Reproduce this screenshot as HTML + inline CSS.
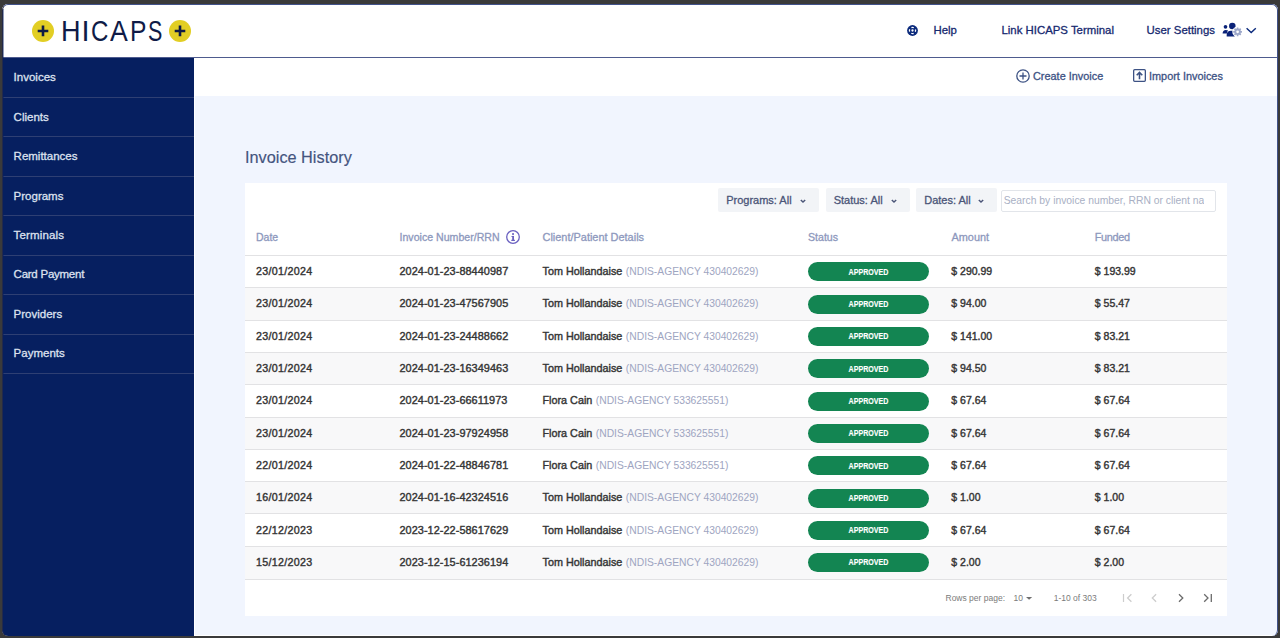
<!DOCTYPE html>
<html><head><meta charset="utf-8">
<style>
*{box-sizing:border-box;margin:0;padding:0}
html,body{width:1280px;height:638px;overflow:hidden;background:#3a3a3a;font-family:"Liberation Sans",sans-serif}
.frame{position:absolute;left:2px;top:4px;width:1276px;height:632px;border-radius:6px;overflow:hidden;background:#fff}
.inner{position:absolute;left:-2px;top:-4px;width:1280px;height:638px}
.fb{position:absolute;left:2px;top:4px;width:1276px;height:632px;border-radius:6px;border:1px solid #41528a;border-left-color:#23294a;border-bottom:0;pointer-events:none}
.a{position:absolute;white-space:nowrap;line-height:1}
.logo{top:17.2px;font-size:29px;color:#0f1b47;transform-origin:0 0}
.md{-webkit-text-stroke:0.3px currentColor}
.header{position:absolute;left:0;top:0;width:1280px;height:57px;background:#fff}
.hline{position:absolute;left:0;top:57px;width:1280px;height:1px;background:#4e5b8e}
.hd{font-size:11.4px;color:#16296f;top:25.1px}
.side{position:absolute;left:0;top:58px;width:194px;height:580px;background:#061f60}
.side .it{position:absolute;left:0;width:194px;height:40px;border-bottom:1px solid #2e3f73}
.side .it span{position:absolute;left:13.6px;top:14.3px;font-size:11.5px;line-height:1;color:#dde1ef;-webkit-text-stroke:0.3px #dde1ef;white-space:nowrap}
.main{position:absolute;left:195px;top:96px;width:1085px;height:542px;background:#f1f5fe}
.sub{position:absolute;left:194px;top:58px;width:1086px;height:38px;background:#fff}
.vline{position:absolute;left:194px;top:58px;width:1px;height:580px;background:#fff}
.card{position:absolute;left:245px;top:183px;width:982px;height:433px;background:#fff}
.btn{position:absolute;top:188px;height:24.4px;background:#f2f4f7;border-radius:2px}
.btn span{position:absolute;left:8.2px;top:6.5px;font-size:11px;line-height:1;color:#4b5578;-webkit-text-stroke:0.3px #4b5578;white-space:nowrap}
.btn svg{position:absolute;top:10.5px}
.th{position:absolute;top:231.6px;color:#8d98bd;font-size:10.6px;line-height:1;-webkit-text-stroke:0.3px #8d98bd;white-space:nowrap}
.row{position:absolute;left:245px;width:982px;border-top:1px solid #e2e2e4}
.td{position:absolute;color:#353535;font-size:11.2px;line-height:1;-webkit-text-stroke:0.4px #353535;white-space:nowrap}
.nm{font-size:10.8px}
.dt{font-size:10.7px;letter-spacing:0.3px}
.inv{font-size:10.9px;letter-spacing:0.05px}
.amt{font-size:10.5px}
.gr{margin-left:0.5px;color:#9ea5c1;-webkit-text-stroke:0 transparent;font-size:10.3px}
.badge{position:absolute;left:808px;width:121px;height:19px;border-radius:9.5px;background:#138552}
.badge span{position:absolute;left:0;width:121px;top:5.3px;text-align:center;color:#fff;font-size:8.9px;line-height:1;font-weight:bold;transform:scaleX(0.8);-webkit-text-stroke:0.15px #fff;letter-spacing:0}
.pg{position:absolute;top:593.9px;color:#7b7b7b;font-size:8.5px;line-height:1;white-space:nowrap}
</style></head><body>
<div class="frame"><div class="inner">
  <div class="header"></div>
  <div class="hline"></div>
  <!-- logo -->
  <svg class="a" style="left:32px;top:20px" width="22" height="22" viewBox="0 0 22 22"><circle cx="11" cy="11" r="11" fill="#e2ce24"/><path d="M11 5.6v10.6M5.7 11h10.6" stroke="#0f1b45" stroke-width="2.6"/></svg>
  <div class="a logo" style="left:60.68px;transform:scaleX(0.934)">H</div><div class="a logo" style="left:81.5px;transform:scaleX(1.0)">I</div><div class="a logo" style="left:90.8px;transform:scaleX(0.83)">C</div><div class="a logo" style="left:110.4px;transform:scaleX(0.92)">A</div><div class="a logo" style="left:130.2px;transform:scaleX(0.85)">P</div><div class="a logo" style="left:148.0px;transform:scaleX(0.74)">S</div>
  <svg class="a" style="left:169px;top:20px" width="22" height="22" viewBox="0 0 22 22"><circle cx="11" cy="11" r="11" fill="#e2ce24"/><path d="M11 5.6v10.6M5.7 11h10.6" stroke="#0f1b45" stroke-width="2.6"/></svg>

  <!-- header right -->
  <svg class="a" style="left:906.9px;top:24.9px" width="11" height="11" viewBox="0 0 11 11"><circle cx="5.5" cy="5.5" r="5.4" fill="#0b2a7c"/><circle cx="5.5" cy="5.5" r="1.15" fill="#fff"/><circle cx="5.5" cy="5.5" r="3.05" fill="none" stroke="#fff" stroke-width="1.25" stroke-dasharray="2.5 2.21" stroke-dashoffset="1.25"/></svg>
  <div class="a md hd" style="left:933.5px">Help</div>
  <div class="a md hd" style="left:1001.5px">Link HICAPS Terminal</div>
  <div class="a md hd" style="left:1146.6px">User Settings</div>
  <svg class="a" style="left:1218px;top:18px" width="44" height="24" viewBox="0 0 44 24">
    <circle cx="7.5" cy="8.8" r="1.85" fill="#0a2278"/>
    <path d="M4.6 15.6c-.1-2.3 1.2-3.7 3.2-3.7 1 0 1.8.3 2.3.7-.7.8-1.1 1.8-1.2 3z" fill="#0a2278"/>
    <circle cx="14.3" cy="8.1" r="3.25" fill="#0a2278"/>
    <path d="M8.7 18.5v-1.8c0-2.3 1.8-3.9 4.2-3.9h2.2c1.5 0 2.5.5 3.1 1.2l-1.6 4.5z" fill="#0a2278"/>
    <circle cx="19.6" cy="13.8" r="5.3" fill="#fff"/>
    <g transform="translate(19.6 13.8)" fill="#9ca7c9">
      <circle r="3.2"/>
      <rect x="-0.85" y="-4.4" width="1.7" height="8.8" rx="0.3"/>
      <rect x="-0.85" y="-4.4" width="1.7" height="8.8" rx="0.3" transform="rotate(45)"/>
      <rect x="-0.85" y="-4.4" width="1.7" height="8.8" rx="0.3" transform="rotate(90)"/>
      <rect x="-0.85" y="-4.4" width="1.7" height="8.8" rx="0.3" transform="rotate(135)"/>
      <circle r="1.35" fill="#fff"/>
    </g>
    <path d="M28.6 10.3l4.6 4.3 4.6-4.3" fill="none" stroke="#0b2a7c" stroke-width="1.4"/>
  </svg>

  <!-- sidebar -->
  <div class="side">
    <div class="it" style="top:0px"><span>Invoices</span></div>
    <div class="it" style="top:39.43px"><span>Clients</span></div>
    <div class="it" style="top:78.86px"><span>Remittances</span></div>
    <div class="it" style="top:118.29px"><span>Programs</span></div>
    <div class="it" style="top:157.72px"><span style="letter-spacing:0.15px">Terminals</span></div>
    <div class="it" style="top:197.15px"><span style="letter-spacing:-0.25px">Card Payment</span></div>
    <div class="it" style="top:236.58px"><span>Providers</span></div>
    <div class="it" style="top:276.01px"><span>Payments</span></div>
  </div>
  <div class="sub"></div>
  <div class="main"></div>
  <div class="vline"></div>
  <div style="position:absolute;left:194px;top:635px;width:1086px;height:3px;background:#fff"></div>

  <!-- subheader actions -->
  <svg class="a" style="left:1016px;top:68.5px" width="14" height="14" viewBox="0 0 14 14"><circle cx="7" cy="7" r="6.2" fill="none" stroke="#3d5284" stroke-width="1.3"/><path d="M7 3.5v7M3.5 7h7" stroke="#3d5284" stroke-width="1.3"/></svg>
  <div class="a md" style="left:1033px;top:71.3px;font-size:10.9px;color:#3d5284">Create Invoice</div>
  <svg class="a" style="left:1133px;top:69px" width="13" height="13" viewBox="0 0 13 13"><rect x="0.65" y="0.65" width="11.7" height="11.7" rx="1" fill="none" stroke="#3d5284" stroke-width="1.3"/><path d="M6.5 10.2V3.6M3.7 6.3l2.8-2.8 2.8 2.8" fill="none" stroke="#3d5284" stroke-width="1.6"/></svg>
  <div class="a md" style="left:1149px;top:71.3px;font-size:10.9px;color:#3d5284">Import Invoices</div>

  <div class="a" style="left:245px;top:148.5px;font-size:16.3px;color:#44547e;-webkit-text-stroke:0.15px #44547e">Invoice History</div>

  <div class="card"></div>
  <div class="btn" style="left:718px;width:100.5px"><span>Programs: All</span><svg style="left:81.8px" width="6" height="5" viewBox="0 0 6 5"><path d="M0.8 0.9l2.2 2.2 2.2-2.2" fill="none" stroke="#4b5578" stroke-width="1.4"/></svg></div>
  <div class="btn" style="left:825.5px;width:84px"><span>Status: All</span><svg style="left:65.5px" width="6" height="5" viewBox="0 0 6 5"><path d="M0.8 0.9l2.2 2.2 2.2-2.2" fill="none" stroke="#4b5578" stroke-width="1.4"/></svg></div>
  <div class="btn" style="left:916px;width:80.5px"><span>Dates: All</span><svg style="left:62px" width="6" height="5" viewBox="0 0 6 5"><path d="M0.8 0.9l2.2 2.2 2.2-2.2" fill="none" stroke="#4b5578" stroke-width="1.4"/></svg></div>
  <div class="a" style="left:1000.5px;top:190px;width:215.5px;height:21.5px;border:1px solid #e2e5ea;border-radius:2px;overflow:hidden"><div style="position:absolute;left:2.2px;top:0;width:200px;height:20px;overflow:hidden"><span style="position:absolute;left:0;top:4.6px;color:#a9b0c4;font-size:10.35px;line-height:1;white-space:nowrap">Search by invoice number, RRN or client name</span></div></div>

  <div class="th" style="left:256px;font-size:10.5px">Date</div>
  <div class="th" style="left:399.5px">Invoice Number/RRN</div>
  <svg class="a" style="left:505.6px;top:229.9px" width="14" height="14" viewBox="0 0 14 14"><circle cx="7" cy="7" r="6.3" fill="none" stroke="#6a60c0" stroke-width="1.3"/><circle cx="7.05" cy="4.1" r="1.05" fill="#6a60c0"/><path d="M5.5 5.9h2.5v3.9h0.9v1.1H5.3V9.8h0.9V7H5.5z" fill="#6a60c0"/></svg>
  <div class="th" style="left:542.5px;font-size:10.95px">Client/Patient Details</div>
  <div class="th" style="left:808px">Status</div>
  <div class="th" style="left:951.5px;font-size:10.9px">Amount</div>
  <div class="th" style="left:1094.8px;font-size:10.9px;letter-spacing:-0.35px">Funded</div>
  <div class="row" style="top:255.00px;height:33.31px;background:#fff"></div>
  <div class="td dt" style="left:256px;top:266.13px">23/01/2024</div>
  <div class="td inv" style="left:399.5px;top:266.13px">2024-01-23-88440987</div>
  <div class="td nm" style="left:542.5px;top:266.13px">Tom Hollandaise <span class="gr">(NDIS-AGENCY 430402629)</span></div>
  <div class="badge" style="top:262.40px"><span>APPROVED</span></div>
  <div class="td amt" style="left:951.3px;top:266.13px">$ 290.99</div>
  <div class="td amt" style="left:1094.8px;top:266.13px">$ 193.99</div>
  <div class="row" style="top:287.31px;height:33.31px;background:#f8f8f9"></div>
  <div class="td dt" style="left:256px;top:298.44px">23/01/2024</div>
  <div class="td inv" style="left:399.5px;top:298.44px">2024-01-23-47567905</div>
  <div class="td nm" style="left:542.5px;top:298.44px">Tom Hollandaise <span class="gr">(NDIS-AGENCY 430402629)</span></div>
  <div class="badge" style="top:294.71px"><span>APPROVED</span></div>
  <div class="td amt" style="left:951.3px;top:298.44px">$ 94.00</div>
  <div class="td amt" style="left:1094.8px;top:298.44px">$ 55.47</div>
  <div class="row" style="top:319.62px;height:33.31px;background:#fff"></div>
  <div class="td dt" style="left:256px;top:330.75px">23/01/2024</div>
  <div class="td inv" style="left:399.5px;top:330.75px">2024-01-23-24488662</div>
  <div class="td nm" style="left:542.5px;top:330.75px">Tom Hollandaise <span class="gr">(NDIS-AGENCY 430402629)</span></div>
  <div class="badge" style="top:327.02px"><span>APPROVED</span></div>
  <div class="td amt" style="left:951.3px;top:330.75px">$ 141.00</div>
  <div class="td amt" style="left:1094.8px;top:330.75px">$ 83.21</div>
  <div class="row" style="top:351.93px;height:33.31px;background:#f8f8f9"></div>
  <div class="td dt" style="left:256px;top:363.06px">23/01/2024</div>
  <div class="td inv" style="left:399.5px;top:363.06px">2024-01-23-16349463</div>
  <div class="td nm" style="left:542.5px;top:363.06px">Tom Hollandaise <span class="gr">(NDIS-AGENCY 430402629)</span></div>
  <div class="badge" style="top:359.33px"><span>APPROVED</span></div>
  <div class="td amt" style="left:951.3px;top:363.06px">$ 94.50</div>
  <div class="td amt" style="left:1094.8px;top:363.06px">$ 83.21</div>
  <div class="row" style="top:384.24px;height:33.31px;background:#fff"></div>
  <div class="td dt" style="left:256px;top:395.37px">23/01/2024</div>
  <div class="td inv" style="left:399.5px;top:395.37px">2024-01-23-66611973</div>
  <div class="td nm" style="left:542.5px;top:395.37px">Flora Cain <span class="gr">(NDIS-AGENCY 533625551)</span></div>
  <div class="badge" style="top:391.64px"><span>APPROVED</span></div>
  <div class="td amt" style="left:951.3px;top:395.37px">$ 67.64</div>
  <div class="td amt" style="left:1094.8px;top:395.37px">$ 67.64</div>
  <div class="row" style="top:416.55px;height:33.31px;background:#f8f8f9"></div>
  <div class="td dt" style="left:256px;top:427.68px">23/01/2024</div>
  <div class="td inv" style="left:399.5px;top:427.68px">2024-01-23-97924958</div>
  <div class="td nm" style="left:542.5px;top:427.68px">Flora Cain <span class="gr">(NDIS-AGENCY 533625551)</span></div>
  <div class="badge" style="top:423.95px"><span>APPROVED</span></div>
  <div class="td amt" style="left:951.3px;top:427.68px">$ 67.64</div>
  <div class="td amt" style="left:1094.8px;top:427.68px">$ 67.64</div>
  <div class="row" style="top:448.86px;height:33.31px;background:#fff"></div>
  <div class="td dt" style="left:256px;top:459.99px">22/01/2024</div>
  <div class="td inv" style="left:399.5px;top:459.99px">2024-01-22-48846781</div>
  <div class="td nm" style="left:542.5px;top:459.99px">Flora Cain <span class="gr">(NDIS-AGENCY 533625551)</span></div>
  <div class="badge" style="top:456.26px"><span>APPROVED</span></div>
  <div class="td amt" style="left:951.3px;top:459.99px">$ 67.64</div>
  <div class="td amt" style="left:1094.8px;top:459.99px">$ 67.64</div>
  <div class="row" style="top:481.17px;height:33.31px;background:#f8f8f9"></div>
  <div class="td dt" style="left:256px;top:492.30px">16/01/2024</div>
  <div class="td inv" style="left:399.5px;top:492.30px">2024-01-16-42324516</div>
  <div class="td nm" style="left:542.5px;top:492.30px">Tom Hollandaise <span class="gr">(NDIS-AGENCY 430402629)</span></div>
  <div class="badge" style="top:488.57px"><span>APPROVED</span></div>
  <div class="td amt" style="left:951.3px;top:492.30px">$ 1.00</div>
  <div class="td amt" style="left:1094.8px;top:492.30px">$ 1.00</div>
  <div class="row" style="top:513.48px;height:33.31px;background:#fff"></div>
  <div class="td dt" style="left:256px;top:524.61px">22/12/2023</div>
  <div class="td inv" style="left:399.5px;top:524.61px">2023-12-22-58617629</div>
  <div class="td nm" style="left:542.5px;top:524.61px">Tom Hollandaise <span class="gr">(NDIS-AGENCY 430402629)</span></div>
  <div class="badge" style="top:520.88px"><span>APPROVED</span></div>
  <div class="td amt" style="left:951.3px;top:524.61px">$ 67.64</div>
  <div class="td amt" style="left:1094.8px;top:524.61px">$ 67.64</div>
  <div class="row" style="top:545.79px;height:34.21px;background:#f8f8f9"></div>
  <div class="td dt" style="left:256px;top:556.92px">15/12/2023</div>
  <div class="td inv" style="left:399.5px;top:556.92px">2023-12-15-61236194</div>
  <div class="td nm" style="left:542.5px;top:556.92px">Tom Hollandaise <span class="gr">(NDIS-AGENCY 430402629)</span></div>
  <div class="badge" style="top:553.19px"><span>APPROVED</span></div>
  <div class="td amt" style="left:951.3px;top:556.92px">$ 2.00</div>
  <div class="td amt" style="left:1094.8px;top:556.92px">$ 2.00</div>
  <div class="row" style="top:579.00px;height:1px"></div>

  <div class="pg" style="left:945.5px">Rows per page:</div>
  <div class="pg" style="left:1013.5px">10</div>
  <svg class="a" style="left:1026px;top:597px" width="7" height="3" viewBox="0 0 7 3"><path d="M0 0h6.2L3.1 2.8z" fill="#6f6f6f"/></svg>
  <div class="pg" style="left:1053.7px">1-10 of 303</div>
  <svg class="a" style="left:1120px;top:592px" width="96" height="12" viewBox="0 0 96 12">
    <path d="M3.5 2v8" stroke="#cdcdcd" stroke-width="1.2"/><path d="M11.4 2.2L7.6 6l3.8 3.8" fill="none" stroke="#cdcdcd" stroke-width="1.3"/>
    <path d="M36.1 2.2L32.3 6l3.8 3.8" fill="none" stroke="#cdcdcd" stroke-width="1.3"/>
    <path d="M59 2.2L62.8 6 59 9.8" fill="none" stroke="#6b6b6b" stroke-width="1.3"/>
    <path d="M84.2 2.2L88 6l-3.8 3.8" fill="none" stroke="#6b6b6b" stroke-width="1.3"/><path d="M91.3 2v8" stroke="#6b6b6b" stroke-width="1.3"/>
  </svg>
</div></div>
<div class="fb"></div>
<div style="position:absolute;left:3px;top:9px;width:1px;height:621px;background:rgba(6,31,96,0.45)"></div>
</body></html>
